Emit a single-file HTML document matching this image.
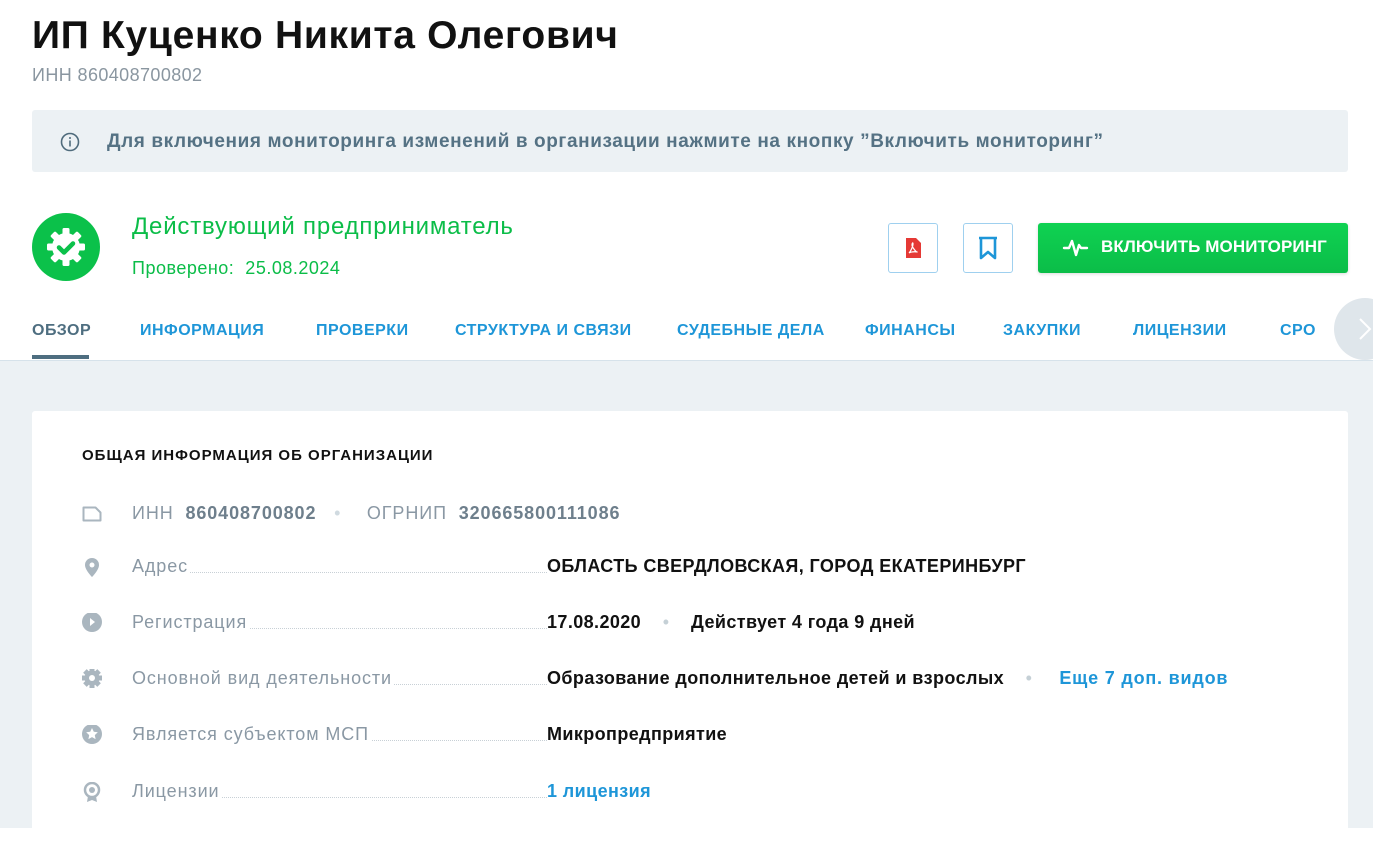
<!DOCTYPE html>
<html><head><meta charset="utf-8"><style>
*{margin:0;padding:0;box-sizing:border-box}
body{width:1373px;height:828px;overflow:hidden;background:#fff;font-family:"Liberation Sans",Arial,sans-serif;position:relative}
.a{position:absolute;white-space:nowrap}
h1{position:absolute;left:32px;top:14px;font-size:39px;font-weight:bold;color:#111;letter-spacing:0.7px}
.tab{position:absolute;top:322px;font-size:16px;font-weight:bold;color:#1e96d8;letter-spacing:0.5px}
.row{position:absolute;left:82px;width:1200px;height:24px}
.lbl{position:absolute;left:50px;top:0;font-size:18px;color:#8a98a4;letter-spacing:0.9px}
.dots{position:absolute;left:50px;width:415px;top:16px;border-bottom:1px dotted #c8d0d6}
.lbl span{background:#fff;padding-right:2px}
.val{position:absolute;left:465px;top:0;font-size:18px;font-weight:bold;color:#111;background:#fff;letter-spacing:0.4px}
.ic{position:absolute;left:0;top:1px}
</style></head><body>
<h1>ИП Куценко Никита Олегович</h1>
<div class="a" style="left:32px;top:65px;font-size:18px;color:#8a96a0;letter-spacing:0.4px">ИНН 860408700802</div>
<div class="a" style="left:32px;top:110px;width:1316px;height:62px;background:#ecf1f4;border-radius:3px"></div>
<svg class="a" style="left:59px;top:131px" width="22" height="22" viewBox="0 0 22 22"><circle cx="11" cy="11" r="8.5" fill="none" stroke="#4f6b7c" stroke-width="1.6"/><rect x="10.2" y="9.5" width="1.6" height="6" fill="#4f6b7c"/><circle cx="11" cy="7" r="1" fill="#4f6b7c"/></svg>
<div class="a" style="left:107px;top:131px;font-size:19px;font-weight:bold;color:#557284;letter-spacing:0.6px">Для включения мониторинга изменений в организации нажмите на кнопку ”Включить мониторинг”</div>
<svg class="a" style="left:32px;top:213px" width="68" height="68" viewBox="0 0 68 68"><circle cx="34" cy="34" r="34" fill="#0bc14a"/>
<g fill="#fff" transform="translate(34,34)"><circle r="14"/><g id="t"><rect x="-3.5" y="-19" width="7" height="8" rx="1.5"/></g><use href="#t" transform="rotate(45)"/><use href="#t" transform="rotate(90)"/><use href="#t" transform="rotate(135)"/><use href="#t" transform="rotate(180)"/><use href="#t" transform="rotate(225)"/><use href="#t" transform="rotate(270)"/><use href="#t" transform="rotate(315)"/></g>
<path d="M27 34.5l5 5 9-9" fill="none" stroke="#0bc14a" stroke-width="4.5" stroke-linecap="round" stroke-linejoin="round"/></svg>
<div class="a" style="left:132px;top:213px;font-size:24px;color:#0bbd48;letter-spacing:0.8px">Действующий предприниматель</div>
<div class="a" style="left:132px;top:258px;font-size:18px;color:#0bbd48;letter-spacing:0.5px">Проверено:&nbsp; 25.08.2024</div>
<div class="a" style="left:888px;top:223px;width:50px;height:50px;border:1px solid #9fd0ef;border-radius:3px"></div>
<svg class="a" style="left:904px;top:237px" width="18" height="22" viewBox="0 0 18 22"><path d="M2 1h10l5 5v15H2z" fill="#e53935"/><path d="M5 16c2-2 4-7 4-9s-1-1-1 1 4 7 5 7-5-1-8 1" fill="none" stroke="#fff" stroke-width="1.2"/></svg>
<div class="a" style="left:963px;top:223px;width:50px;height:50px;border:1px solid #9fd0ef;border-radius:3px"></div>
<svg class="a" style="left:976px;top:235px" width="24" height="26" viewBox="0 0 24 26"><path d="M3 3h18M5 3v20l7-6 7 6V3" fill="none" stroke="#1e96d8" stroke-width="2.6" stroke-linejoin="round"/></svg>
<div class="a" style="left:1038px;top:223px;width:310px;height:50px;background:linear-gradient(#0fd252,#0bbd48);border-radius:3px;box-shadow:0 1px 3px rgba(0,0,0,.15)"></div>
<svg class="a" style="left:1062px;top:236px" width="28" height="24" viewBox="0 0 28 24"><path d="M2 12h5l3-7 4 14 3-10 2 3h6" fill="none" stroke="#fff" stroke-width="2.4" stroke-linejoin="round" stroke-linecap="round"/></svg>
<div class="a" style="left:1101px;top:237px;font-size:17px;font-weight:bold;color:#fff;letter-spacing:0.1px">ВКЛЮЧИТЬ МОНИТОРИНГ</div>
<div class="tab" style="left:32px;color:#4e6e80">ОБЗОР</div>
<div class="tab" style="left:140px">ИНФОРМАЦИЯ</div>
<div class="tab" style="left:316px">ПРОВЕРКИ</div>
<div class="tab" style="left:455px">СТРУКТУРА И СВЯЗИ</div>
<div class="tab" style="left:677px">СУДЕБНЫЕ ДЕЛА</div>
<div class="tab" style="left:865px">ФИНАНСЫ</div>
<div class="tab" style="left:1003px">ЗАКУПКИ</div>
<div class="tab" style="left:1133px">ЛИЦЕНЗИИ</div>
<div class="tab" style="left:1280px">СРО</div>
<div class="a" style="left:0;top:360px;width:1373px;height:468px;background:#ecf1f4;border-top:1px solid #d6e2ea"></div>
<div class="a" style="left:32px;top:355px;width:57px;height:4px;background:#4e6e80"></div>
<div class="a" style="left:1334px;top:298px;width:62px;height:62px;border-radius:50%;background:#dfe6eb"></div>
<svg class="a" style="left:1356px;top:316px" width="17" height="26" viewBox="0 0 17 26"><path d="M4 3l10 10-10 10" fill="none" stroke="#fff" stroke-width="2"/></svg>
<div class="a" style="left:32px;top:411px;width:1316px;height:430px;background:#fff;border-radius:3px"></div>
<div class="a" style="left:82px;top:447px;font-size:15px;font-weight:bold;color:#111;letter-spacing:1px">ОБЩАЯ ИНФОРМАЦИЯ ОБ ОРГАНИЗАЦИИ</div>
<div class="row" style="top:503px">
<svg class="ic" width="20" height="20" viewBox="0 0 20 20"><path d="M1.5 3.5h12l5 5v8h-17z" fill="none" stroke="#aab6bf" stroke-width="2" stroke-linejoin="round"/></svg>
<div class="lbl">ИНН&nbsp; <b style="color:#6e7f8c">860408700802</b> &nbsp;&nbsp;<span style="color:#d0dae0">•</span>&nbsp;&nbsp;&nbsp; ОГРНИП&nbsp; <b style="color:#6e7f8c">320665800111086</b></div></div>
<div class="row" style="top:556px"><svg class="ic" width="20" height="22" viewBox="0 0 20 22"><path d="M10 1a7 7 0 0 0-7 7c0 5 7 12 7 12s7-7 7-12a7 7 0 0 0-7-7z" fill="#aab6bf"/><circle cx="10" cy="8" r="2.5" fill="#fff"/></svg><div class="dots"></div><div class="lbl"><span>Адрес</span></div><div class="val">ОБЛАСТЬ СВЕРДЛОВСКАЯ, ГОРОД ЕКАТЕРИНБУРГ</div></div>
<div class="row" style="top:612px"><svg class="ic" width="20" height="22" viewBox="0 0 20 22"><circle cx="10" cy="9" r="10" fill="#aab6bf"/><path d="M8 5v8l5-4z" fill="#fff"/></svg><div class="dots"></div><div class="lbl"><span>Регистрация</span></div><div class="val">17.08.2020 &nbsp;&nbsp;&nbsp;<span style="color:#c5d0d6;font-weight:normal">•</span>&nbsp;&nbsp;&nbsp; Действует 4 года 9 дней</div></div>
<div class="row" style="top:668px"><svg class="ic" width="20" height="22" viewBox="0 0 20 22"><g transform="translate(10,9)" fill="#aab6bf"><circle r="7.5"/><rect x="-2.5" y="-10" width="5" height="20"/><rect x="-2.5" y="-10" width="5" height="20" transform="rotate(45)"/><rect x="-2.5" y="-10" width="5" height="20" transform="rotate(90)"/><rect x="-2.5" y="-10" width="5" height="20" transform="rotate(135)"/><circle r="3" fill="#fff"/></g></svg><div class="dots"></div><div class="lbl"><span>Основной вид деятельности</span></div><div class="val">Образование дополнительное детей и взрослых &nbsp;&nbsp;&nbsp;<span style="color:#c5d0d6;font-weight:normal">•</span>&nbsp;&nbsp;&nbsp;&nbsp; <span style="color:#1e96d8;letter-spacing:0.8px">Еще 7 доп. видов</span></div></div>
<div class="row" style="top:724px"><svg class="ic" width="20" height="22" viewBox="0 0 20 22"><circle cx="10" cy="9" r="10" fill="#aab6bf"/><path d="M10 3l1.8 3.8 4 .5-3 2.8.8 4-3.6-2-3.6 2 .8-4-3-2.8 4-.5z" fill="#fff"/></svg><div class="dots"></div><div class="lbl"><span>Является субъектом МСП</span></div><div class="val">Микропредприятие</div></div>
<div class="row" style="top:781px"><svg class="ic" width="20" height="22" viewBox="0 0 20 22"><circle cx="10" cy="8" r="7" fill="none" stroke="#aab6bf" stroke-width="2.5"/><circle cx="10" cy="8" r="3" fill="#aab6bf"/><path d="M6 14l-1 6 5-2 5 2-1-6" fill="#aab6bf"/></svg><div class="dots"></div><div class="lbl"><span>Лицензии</span></div><div class="val" style="color:#1e96d8">1 лицензия</div></div>
</body></html>
